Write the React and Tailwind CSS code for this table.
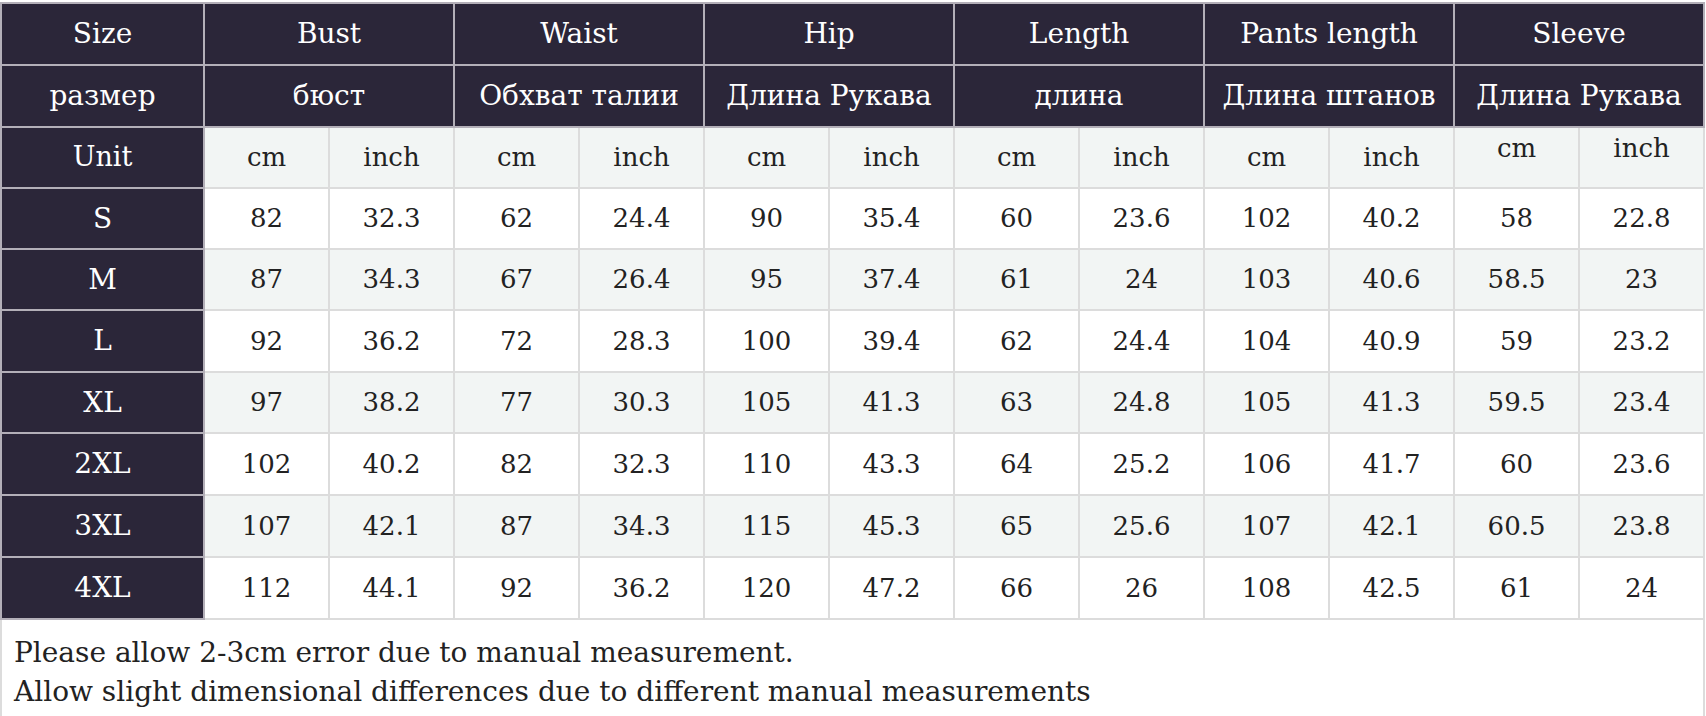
const groups = [
  { en: "Bust", ru: "бюст" },
  { en: "Waist", ru: "Обхват талии" },
  { en: "Hip", ru: "Длина Рукава" },
  { en: "Length", ru: "длина" },
  { en: "Pants length", ru: "Длина штанов" },
  { en: "Sleeve", ru: "Длина Рукава" },
];

const rows = [
  ["S", "82", "32.3", "62", "24.4", "90", "35.4", "60", "23.6", "102", "40.2", "58", "22.8"],
  ["M", "87", "34.3", "67", "26.4", "95", "37.4", "61", "24", "103", "40.6", "58.5", "23"],
  ["L", "92", "36.2", "72", "28.3", "100", "39.4", "62", "24.4", "104", "40.9", "59", "23.2"],
  ["XL", "97", "38.2", "77", "30.3", "105", "41.3", "63", "24.8", "105", "41.3", "59.5", "23.4"],
  ["2XL", "102", "40.2", "82", "32.3", "110", "43.3", "64", "25.2", "106", "41.7", "60", "23.6"],
  ["3XL", "107", "42.1", "87", "34.3", "115", "45.3", "65", "25.6", "107", "42.1", "60.5", "23.8"],
  ["4XL", "112", "44.1", "92", "36.2", "120", "47.2", "66", "26", "108", "42.5", "61", "24"],
];

// row heights (px) so that lines fall where the chart has them
const bodyHeights = ["h-[61px]", "h-[61px]", "h-[62px]", "h-[61px]", "h-[62px]", "h-[62px]", "h-[62px]"];

export default function App() {
  const dark = "bg-[#2b2639] text-white border-2 border-[#b3afb8]";
  const cell = "border-2 border-[#dcdcdc] text-[#222]";

  return (
    <div
      className="w-[1706px] h-[716px] bg-white overflow-hidden pt-[2px]"
      style={{ fontFamily: '"DejaVu Serif", serif' }}
    >
      <table className="table-fixed border-collapse w-[1705px] text-[26px] text-center">
        <colgroup>
          <col className="w-[203px]" />
          {Array.from({ length: 12 }).map((_, i) => (
            <col key={i} className="w-[125px]" />
          ))}
        </colgroup>
        <tbody>
          {/* English headers */}
          <tr className="h-[62px] text-[28px]">
            <td className={dark}>Size</td>
            {groups.map((g) => (
              <td key={g.en} colSpan={2} className={dark}>
                {g.en}
              </td>
            ))}
          </tr>
          {/* Russian headers */}
          <tr className="h-[62px] text-[28px]">
            <td className={dark}>размер</td>
            {groups.map((g, i) => (
              <td key={i} colSpan={2} className={`${dark} whitespace-nowrap`}>
                {g.ru}
              </td>
            ))}
          </tr>
          {/* Units */}
          <tr className="h-[61px] bg-[#f2f5f4]">
            <td className={`${dark} text-[27px]`}>Unit</td>
            {groups.map((g, i) => (
              <>
                <td key={`c${i}`} className={`${cell} ${i === 5 ? "pb-[18px]" : ""}`}>cm</td>
                <td key={`i${i}`} className={`${cell} ${i === 5 ? "pb-[18px]" : ""}`}>inch</td>
              </>
            ))}
          </tr>
          {rows.map((r, ri) => (
            <tr key={r[0]} className={`${bodyHeights[ri]} ${ri % 2 === 1 ? "bg-[#f2f5f4]" : "bg-white"}`}>
              <td className={`${dark} text-[28px]`}>{r[0]}</td>
              {r.slice(1).map((v, i) => (
                <td key={i} className={cell}>
                  {v}
                </td>
              ))}
            </tr>
          ))}
        </tbody>
      </table>
      {/* Footnote */}
      <div className="w-[1705px] h-[120px] border-x-2 border-[#dcdcdc] px-[12px] pt-[13px] text-[28px] leading-[39px] text-[#222]">
        <p>Please allow 2-3cm error due to manual measurement.</p>
        <p>Allow slight dimensional differences due to different manual measurements</p>
      </div>
    </div>
  );
}
